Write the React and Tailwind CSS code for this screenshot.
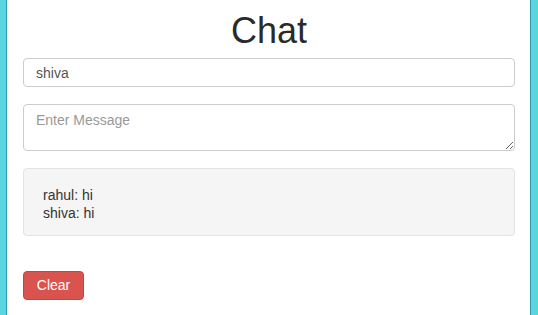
export default function App() {
  return (
    <div
      className="flex h-[315px] w-[538px] overflow-hidden bg-white text-[#333]"
      style={{ fontFamily: '"Liberation Sans", Arial, sans-serif' }}
    >
      <div className="w-[7px] shrink-0 border-r border-[#2c9eab] bg-[#5ad4df]" />
      <div className="flex min-w-0 flex-1 flex-col pl-[16px] pr-[15px]">
        <h1 className="mt-[11px] h-[40px] text-center text-[36px] leading-[40px] text-[#2a2a2a]">
          Chat
        </h1>
        <input
          readOnly
          value="shiva"
          className="mt-[7px] h-[29px] w-full rounded-[4px] border border-[#cccccc] px-[12px] text-[14px] text-[#555] outline-none"
        />
        <textarea
          readOnly
          placeholder="Enter Message"
          className="mt-[17px] block h-[47px] w-full rounded-[4px] border border-[#cccccc] px-[12px] pt-[5px] text-[14px] leading-[20px] text-[#555] outline-none placeholder:text-[#999]"
        />
        <div className="mt-[17px] h-[68px] w-full rounded-[4px] border border-[#e3e3e3] bg-[#f5f5f5] px-[19px] pt-[17px] text-[14px] leading-[18px] text-[#333]">
          <div>rahul: hi</div>
          <div>shiva: hi</div>
        </div>
        <div className="mt-[35px]">
          <button className="h-[29px] w-[61px] rounded-[4px] border border-[#d43f3a] bg-[#d9534f] text-[14px] text-white">
            Clear
          </button>
        </div>
      </div>
      <div className="w-[8px] shrink-0 border-l border-[#2c9eab] bg-[#5ad4df]" />
    </div>
  );
}
